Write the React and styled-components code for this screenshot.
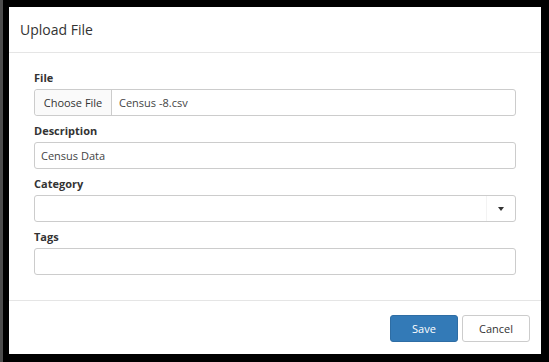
import React from 'react';
import styled, { createGlobalStyle } from 'styled-components';

const GlobalStyle = createGlobalStyle`
    html, body {
        margin: 0;
        padding: 0;
        background: #000;
    }
    body {
        font-family: 'Open Sans', 'Noto Sans', sans-serif;
        color: #333;
    }
`;

const Screen = styled.div`
    display: flex;
    width: 549px;
    height: 362px;
    box-sizing: border-box;
    padding: 7px 8px 8px 0;
    gap: 6px;
    background: #000;
    overflow: hidden;
`;

const Sliver = styled.div`
    width: 3px;
    margin-top: -7px;
    margin-bottom: -8px;
    background: #4d4d4d;
`;

const Modal = styled.div`
    flex: 1;
    background: #fff;
    display: flex;
    flex-direction: column;
`;

const Header = styled.div`
    height: 46px;
    box-sizing: border-box;
    border-bottom: 1px solid #e5e5e5;
    display: flex;
    align-items: center;
    padding: 0 11px 1px;
`;

const Title = styled.h4`
    margin: 0;
    font-size: 14px;
    font-weight: 400;
    color: #333;
`;

const Body = styled.div`
    padding: 16px 25px 25px;
    border-bottom: 1px solid #e5e5e5;
`;

const Group = styled.div`
    margin-bottom: 6px;
    &:last-child {
        margin-bottom: 0;
    }
`;

const Label = styled.label`
    display: block;
    font-size: 11px;
    font-weight: 700;
    line-height: 17px;
    margin-bottom: 3px;
    color: #333;
`;

const Field = styled.div`
    height: 27px;
    box-sizing: border-box;
    border: 1px solid #ccc;
    border-radius: 3px;
    display: flex;
    align-items: center;
    font-size: 11px;
    color: #555;
    background: #fff;
    position: relative;
`;

const FileButton = styled.div`
    width: 76px;
    height: 100%;
    display: flex;
    align-items: center;
    justify-content: center;
    background: #fafafa;
    border-right: 1px solid #ccc;
    border-radius: 3px 0 0 3px;
    color: #333;
`;

const Value = styled.span`
    padding-left: ${p => p.$pad || 7}px;
    color: #444;
`;

const Caret = styled.div`
    position: absolute;
    right: 0;
    top: 0;
    bottom: 0;
    width: 28px;
    border-left: 1px solid #f3f3f3;
    display: flex;
    align-items: center;
    justify-content: center;
    &::after {
        content: '';
        border-left: 3.5px solid transparent;
        border-right: 3.5px solid transparent;
        border-top: 4px solid #333;
    }
`;

const Footer = styled.div`
    display: flex;
    justify-content: flex-end;
    gap: 4px;
    padding: 14px 11px 0;
`;

const Button = styled.button`
    width: 68px;
    height: 27px;
    box-sizing: border-box;
    border-radius: 3px;
    font-family: inherit;
    font-size: 11px;
    border: 1px solid ${p => (p.$primary ? '#2e6da4' : '#ccc')};
    background: ${p => (p.$primary ? '#337ab7' : '#fff')};
    color: ${p => (p.$primary ? '#fff' : '#333')};
    padding: 0;
`;

export default function App() {
    return (
        <Screen>
            <GlobalStyle />
            <Sliver />
            <Modal>
                <Header>
                    <Title>Upload File</Title>
                </Header>
                <Body>
                    <Group>
                        <Label>File</Label>
                        <Field>
                            <FileButton>Choose File</FileButton>
                            <Value>Census -8.csv</Value>
                        </Field>
                    </Group>
                    <Group>
                        <Label>Description</Label>
                        <Field>
                            <Value $pad={6}>Census Data</Value>
                        </Field>
                    </Group>
                    <Group>
                        <Label>Category</Label>
                        <Field>
                            <Caret />
                        </Field>
                    </Group>
                    <Group>
                        <Label>Tags</Label>
                        <Field />
                    </Group>
                </Body>
                <Footer>
                    <Button $primary>Save</Button>
                    <Button>Cancel</Button>
                </Footer>
            </Modal>
        </Screen>
    );
}
